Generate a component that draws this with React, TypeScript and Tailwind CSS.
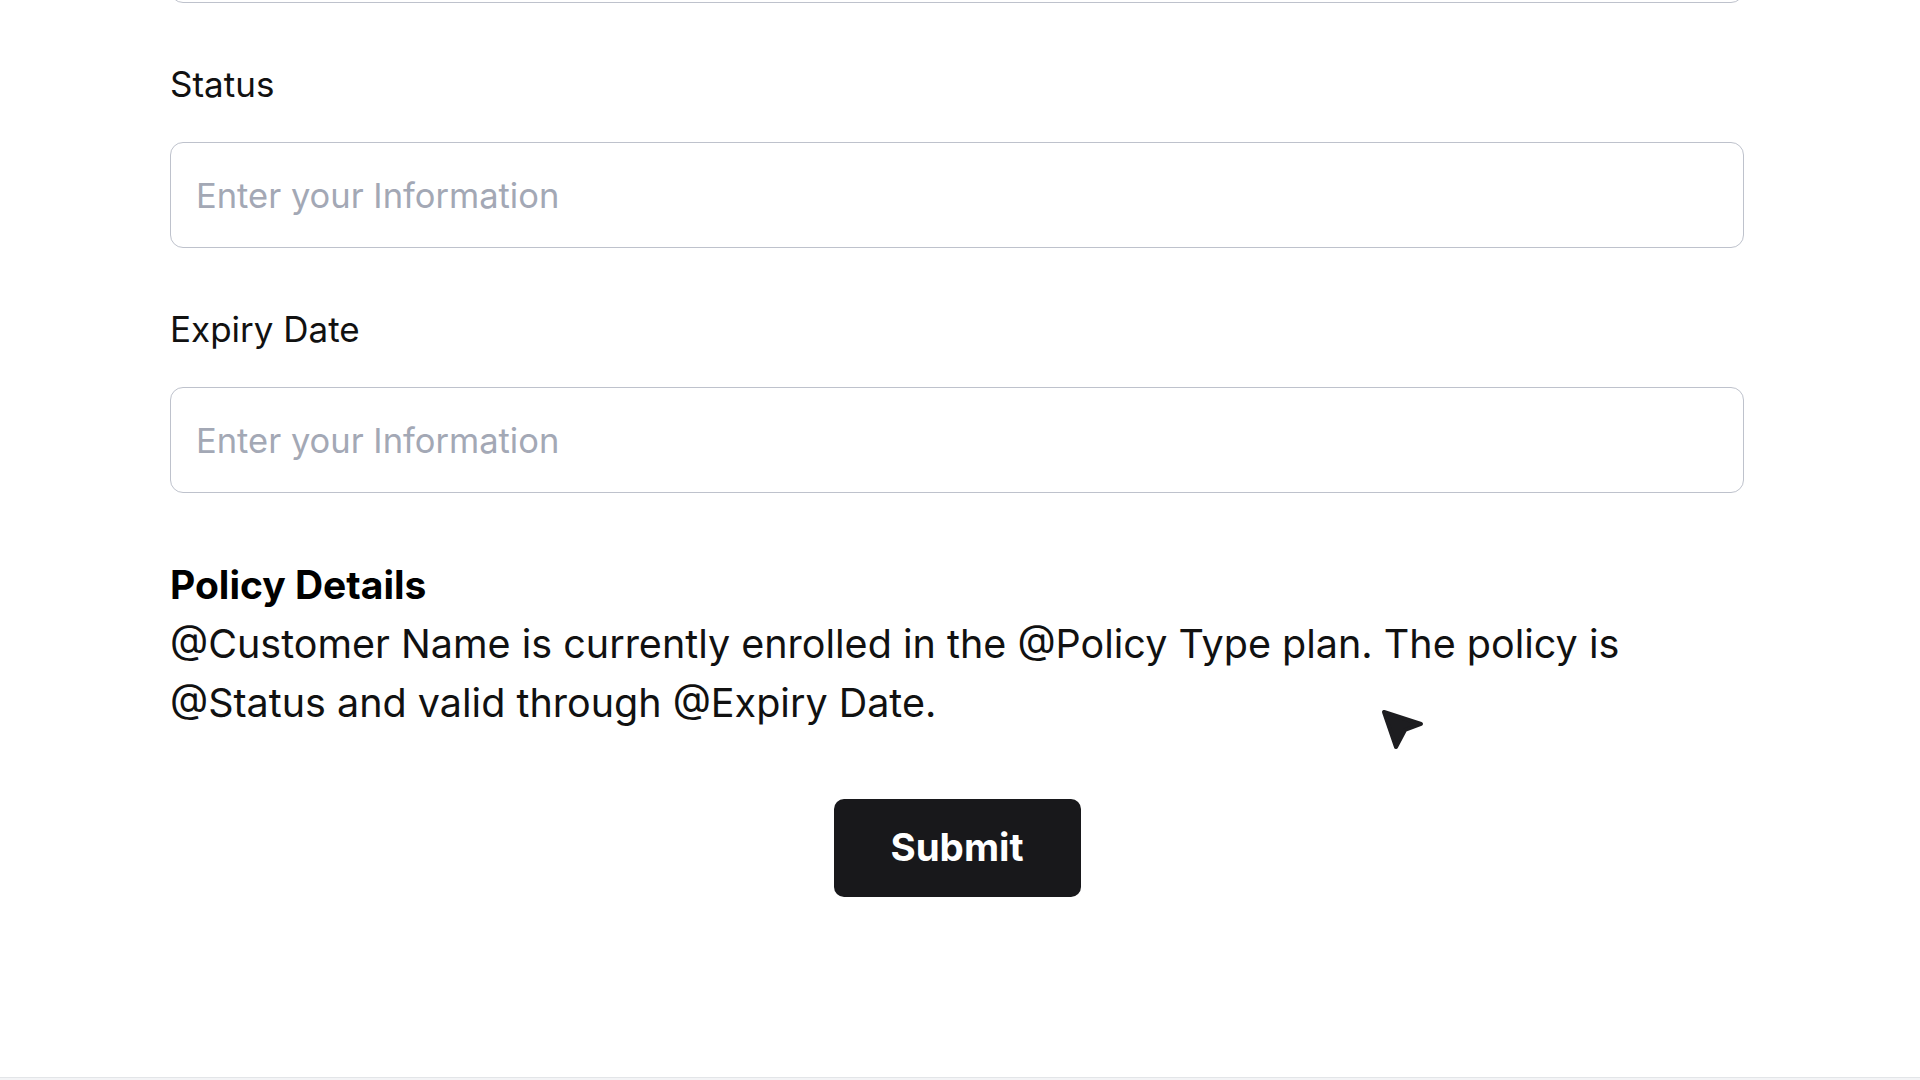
import React from "react";

const fields = ["Status", "Expiry Date"];

const TextField = ({ label }: { label: string }) => (
  <div className="flex flex-col">
    <label className="text-[35px] leading-[40px] text-[#111111] mb-[38px]">{label}</label>
    <input
      type="text"
      placeholder="Enter your Information"
      className="h-[106px] w-full rounded-[13px] border-[1.5px] border-[#bec2cc] bg-white px-[25px] text-[34.5px] text-[#111111] placeholder:text-[#a3a8b5] outline-none"
    />
  </div>
);

// small filled pointer shown over the text block
const Pointer = () => (
  <svg
    className="absolute left-[1378px] top-[705px]"
    width="50"
    height="48"
    viewBox="0 0 50 48"
  >
    <path
      d="M6 7 L43 19 L27 25 L18 42 Z"
      fill="#1d1d20"
      stroke="#1d1d20"
      strokeWidth="4"
      strokeLinejoin="round"
    />
  </svg>
);

export default function App() {
  return (
    <div className="relative flex min-h-screen flex-col bg-white font-['Inter','Noto_Sans',sans-serif] overflow-hidden">
      <main className="flex-1 ml-[170px] w-[1574px]">
        {/* bottom edge of the field above */}
        <div className="mt-[-103px] h-[106px] rounded-[13px] border-[1.5px] border-[#bec2cc]" />

        <div className="mt-[61px] flex flex-col gap-[61px]">
          {fields.map((f) => (
            <TextField key={f} label={f} />
          ))}
        </div>

        <section className="mt-[66px]">
          <h3 className="text-[39px] font-bold leading-[52px] text-black">Policy Details</h3>
          <p className="mt-[4px] text-[39.5px] leading-[59px] text-[#111111]">
            @Customer Name is currently enrolled in the @Policy Type plan. The policy is
            <br />
            @Status and valid through @Expiry Date.
          </p>
        </section>

        <div className="mt-[66px] flex justify-center">
          <button className="h-[98px] w-[247px] rounded-[10px] bg-[#18181b] text-[38.5px] font-bold text-white">
            Submit
          </button>
        </div>
      </main>

      <footer className="h-[3px] border-t border-[#e3e5e8] bg-[#f3f4f6]" />

      <Pointer />
    </div>
  );
}
